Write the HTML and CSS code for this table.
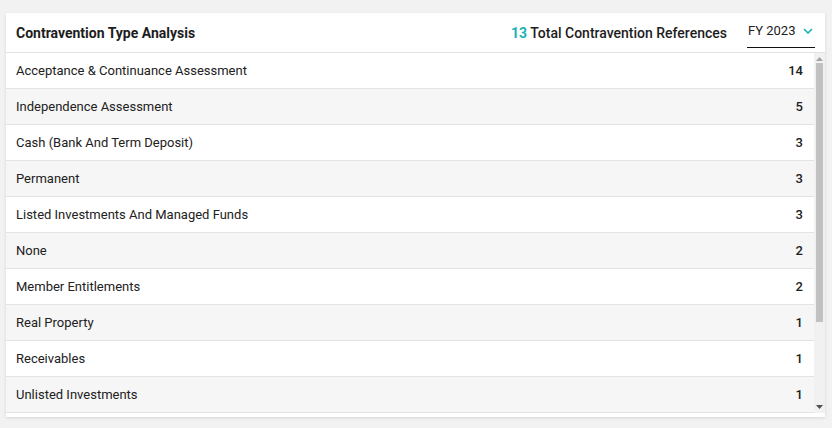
FILE: index.html
```html
<!DOCTYPE html>
<html>
<head>
<meta charset="utf-8">
<link rel="stylesheet" href="styles.css">
</head>
<body>
<div class="card">
  <div class="card-header">
    <div class="title">Contravention Type Analysis</div>
    <div class="header-right">
      <div class="total"><span class="count">13</span> Total Contravention References</div>
      <div class="select">
        <span>FY 2023</span>
        <svg class="chev" width="10" height="6" viewBox="0 0 10 6"><path d="M1 1 L5 5 L9 1" fill="none" stroke="#1ab0b5" stroke-width="1.6"/></svg>
      </div>
    </div>
  </div>
  <div class="body">
    <div class="list">
      <div class="row"><span>Acceptance &amp; Continuance Assessment</span><b>14</b></div>
      <div class="row"><span>Independence Assessment</span><b>5</b></div>
      <div class="row"><span>Cash (Bank And Term Deposit)</span><b>3</b></div>
      <div class="row"><span>Permanent</span><b>3</b></div>
      <div class="row"><span>Listed Investments And Managed Funds</span><b>3</b></div>
      <div class="row"><span>None</span><b>2</b></div>
      <div class="row"><span>Member Entitlements</span><b>2</b></div>
      <div class="row"><span>Real Property</span><b>1</b></div>
      <div class="row"><span>Receivables</span><b>1</b></div>
      <div class="row"><span>Unlisted Investments</span><b>1</b></div>
    </div>
    <div class="scrollbar">
      <svg class="arrow" width="7" height="4" viewBox="0 0 7 4"><path d="M0 4 L3.5 0 L7 4 Z" fill="#a3a3a3"/></svg>
      <div class="track"><div class="thumb"></div></div>
      <svg class="arrow" width="7" height="4" viewBox="0 0 7 4"><path d="M0 0 L7 0 L3.5 4 Z" fill="#505050"/></svg>
    </div>
  </div>
</div>
</body>
</html>
```
FILE: styles.css
```css
html, body {
  margin: 0;
  padding: 0;
}
body {
  background: #f2f2f2;
  font-family: Roboto, "Liberation Sans", Arial, sans-serif;
  color: #212121;
  padding: 13px 7px 0 6px;
  height: 428px;
  box-sizing: border-box;
}
.card {
  background: #fff;
  width: 819px;
  height: 404px;
  box-shadow: 0 1px 3px rgba(0,0,0,0.12);
  display: flex;
  flex-direction: column;
}
.card-header {
  height: 39px;
  border-bottom: 1px solid #e2e2e2;
  display: flex;
  align-items: center;
  justify-content: space-between;
  padding: 0 10px;
  flex: none;
}
.title {
  font-size: 14px;
  font-weight: 700;
  color: #1d1d1d;
}
.header-right {
  display: flex;
  align-items: center;
  gap: 20px;
}
.total {
  font-size: 14px;
  font-weight: 500;
  color: #1d1d1d;
}
.count {
  color: #1ab0b5;
  font-weight: 700;
}
.select {
  width: 68px;
  height: 26px;
  box-sizing: border-box;
  border-bottom: 1px solid #111;
  display: flex;
  align-items: center;
  justify-content: space-between;
  font-size: 13px;
  padding: 0 0 1px 1px;
  margin-top: 5px;
}
.select span {
  margin-top: -7px;
}
.chev {
  margin-top: -7px;
  margin-right: 2px;
}
.body {
  display: flex;
  height: 360px;
  flex: none;
}
.list {
  flex: 1;
  overflow: hidden;
}
.row {
  height: 36px;
  box-sizing: border-box;
  border-bottom: 1px solid #e3e3e3;
  display: flex;
  align-items: center;
  justify-content: space-between;
  padding: 0 11px 0 10px;
  font-size: 13px;
}
.row:nth-child(even) {
  background: #f6f6f6;
}
.row b {
  font-weight: 500;
}
.scrollbar {
  width: 11px;
  background: #f1f1f1;
  display: flex;
  flex-direction: column;
  align-items: center;
}
.arrow {
  flex: none;
  margin: 4px 0 2px;
}
.arrow:last-child {
  margin: 2px 0 4px;
}
.track {
  flex: 1;
  width: 100%;
  padding: 0 2px;
  box-sizing: border-box;
}
.thumb {
  height: 259px;
  background: #c1c1c1;
}
```
